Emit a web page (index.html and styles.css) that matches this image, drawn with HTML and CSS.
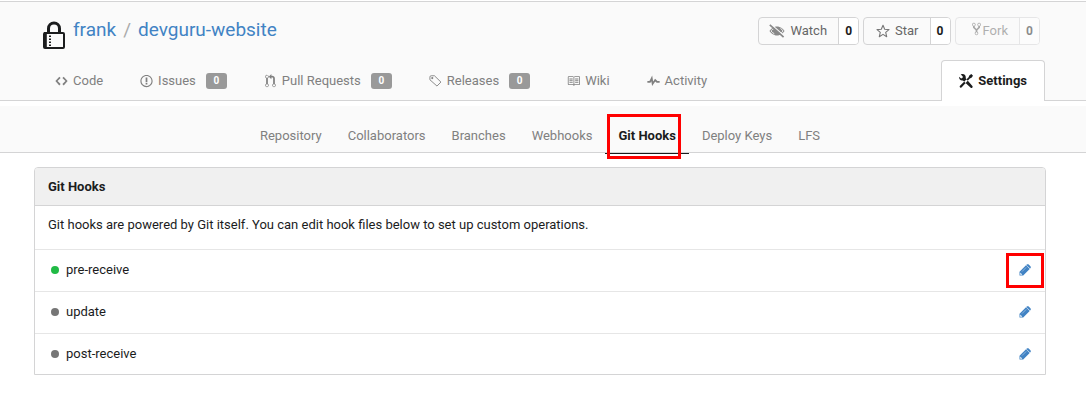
FILE: index.html
```html
<!DOCTYPE html>
<html lang="en">
<head>
<meta charset="utf-8">
<meta name="viewport" content="width=device-width, initial-scale=1">
<title>frank/devguru-website - Git Hooks</title>
<link rel="stylesheet" href="styles.css">
</head>
<body>
<svg class="sprite" aria-hidden="true">
  <symbol id="pencil" viewBox="0 0 12 12"><path d="M.5 7.800 7 1.300l3.700 3.700-6.500 6.500H.5zM7.800.6c.7-.6 1.300-.6 1.900 0l1.700 1.700c.6.6.6 1.300 0 1.900l-.4.4L7.300 1.100z"/><path d="M1.400 9v1.600H3zM3 7.600l4.200-4.200" fill="#fff" stroke="#fff" stroke-width=".4"/></symbol>
</svg>
<header class="repo-header">
  <div class="container title-row">
    <svg class="lock" viewBox="0 0 22 28" aria-hidden="true">
      <path fill="none" stroke="#1b1c1d" stroke-width="3" d="M5.500 12V7.500a5.500 5.500 0 0 1 11 0V12"/>
      <rect x="1" y="12" width="20" height="15" rx="1" fill="#fafafa" stroke="#1b1c1d" stroke-width="2"/>
      <path fill="#1b1c1d" d="M1 11h2.800v16H1zM6 14.500h2V16H6zM6 17.500h2V19H6zM6 20.500h2V22H6zM6 23.500h2V25H6z"/>
    </svg>
    <h1 class="title"><a href="#">frank</a><span class="slash">/</span><a href="#">devguru-website</a></h1>
    <div class="actions">
      <div class="labeled">
        <button class="action" type="button"><svg class="icon-eye" viewBox="0 0 16 14" aria-hidden="true"><path d="M8 2.500C4.500 2.500 1.700 5 .5 7c1.200 2 4 4.500 7.500 4.500S14.300 9 15.500 7C14.300 5 11.500 2.500 8 2.500z" fill="#888"/><path d="M5 4.500C3.500 5 2.700 6 2 7c.8 1.100 2 2.200 3.300 2.700M11.500 4.500c1.300.6 2 1.500 2.500 2.500-.6 1-1.500 2-2.800 2.600" stroke="#fafafa" stroke-width=".9" fill="none"/><path d="M2.200.4 15.500 12.200" stroke="#fafafa" stroke-width="1.200"/><path d="M.8.8 14.600 13.200" stroke="#888" stroke-width="1.700"/></svg>Watch</button><a class="count" href="#">0</a>
      </div>
      <div class="labeled">
        <button class="action star" type="button"><svg class="icon-star" viewBox="0 0 14 14" aria-hidden="true"><path d="M7 1.200 8.700 5.200l4.300.4-3.300 2.800 1 4.300L7 10.400l-3.700 2.300 1-4.300L1 5.600l4.300-.4z" fill="none" stroke="#777" stroke-width="1.100" stroke-linejoin="round"/></svg>Star</button><a class="count" href="#">0</a>
      </div>
      <div class="labeled disabled">
        <button class="action fork" type="button" disabled><svg class="icon-fork" viewBox="0 0 10 16" aria-hidden="true"><path fill="#555" fill-rule="evenodd" d="M8 1a1.993 1.993 0 0 0-1 3.720V6L5 8 3 6V4.720A1.993 1.993 0 0 0 2 1a1.993 1.993 0 0 0-1 3.720V6.500l3 3v1.780A1.993 1.993 0 0 0 5 15a1.993 1.993 0 0 0 1-3.720V9.500l3-3V4.720A1.993 1.993 0 0 0 8 1zM2 4.200C1.340 4.200.8 3.650.8 3c0-.65.550-1.200 1.200-1.200.65 0 1.200.550 1.200 1.200 0 .65-.550 1.200-1.200 1.200zm3 10c-.66 0-1.200-.550-1.200-1.200 0-.65.550-1.200 1.200-1.200.65 0 1.200.550 1.200 1.200 0 .65-.550 1.200-1.200 1.200zm3-10c-.66 0-1.200-.550-1.200-1.200 0-.65.550-1.200 1.200-1.200.65 0 1.200.550 1.200 1.200 0 .65-.550 1.200-1.200 1.200z"/></svg>Fork</button><a class="count" href="#">0</a>
      </div>
    </div>
  </div>
  <nav class="container tabs" aria-label="Repository">
    <a class="tab" href="#"><svg viewBox="0 0 14 16" aria-hidden="true"><path d="M9.500 3 8 4.500 11.500 8 8 11.500 9.500 13 14 8 9.500 3zm-5 0L0 8l4.500 5L6 11.500 2.500 8 6 4.500 4.500 3z"/></svg>Code</a>
    <a class="tab" href="#"><svg viewBox="0 0 14 16" aria-hidden="true"><path d="M7 2.300c3.140 0 5.700 2.560 5.700 5.700s-2.560 5.700-5.700 5.700A5.710 5.710 0 0 1 1.300 8c0-3.140 2.560-5.700 5.700-5.700zM7 1C3.140 1 0 4.140 0 8s3.140 7 7 7 7-3.140 7-7-3.140-7-7-7zm1 3H6v5h2V4zm0 6H6v2h2v-2z" fill-rule="evenodd"/></svg>Issues<span class="badge">0</span></a>
    <a class="tab" href="#"><svg viewBox="0 0 12 16" aria-hidden="true"><path fill-rule="evenodd" d="M11 11.280V5c-.030-.780-.340-1.470-.940-2.060C9.460 2.350 8.780 2.030 8 2H7V0L4 3l3 3V4h1c.270.020.480.110.690.310.210.200.300.420.310.690v6.280A1.993 1.993 0 0 0 10 15a1.993 1.993 0 0 0 1-3.720zm-1 2.920c-.660 0-1.200-.550-1.200-1.200 0-.650.550-1.200 1.200-1.200.650 0 1.200.550 1.200 1.200 0 .650-.550 1.200-1.200 1.200zM4 3c0-1.110-.890-2-2-2a1.993 1.993 0 0 0-1 3.720v6.560A1.993 1.993 0 0 0 2 15a1.993 1.993 0 0 0 1-3.720V4.720c.590-.340 1-.980 1-1.720zm-.8 10c0 .660-.550 1.200-1.200 1.200-.650 0-1.200-.550-1.200-1.200 0-.650.550-1.200 1.200-1.200.650 0 1.200.550 1.200 1.200zM2 4.200C1.340 4.200.8 3.650.8 3c0-.650.550-1.200 1.200-1.200.650 0 1.200.550 1.200 1.200 0 .650-.550 1.200-1.200 1.200z"/></svg>Pull Requests<span class="badge">0</span></a>
    <a class="tab" href="#"><svg viewBox="0 0 14 16" aria-hidden="true"><path d="M.6 3.600A1.500 1.500 0 0 1 2.100 2h3.700l7.400 7.200-4.500 4.600L.6 6.600z" fill="none" stroke="#888" stroke-width="1.100" stroke-linejoin="round"/><circle cx="3.300" cy="4.700" r="1.200"/></svg>Releases<span class="badge">0</span></a>
    <a class="tab" href="#"><svg viewBox="0 0 16 16" aria-hidden="true"><path fill-rule="evenodd" d="M3 5h4v1H3V5zm0 3h4V7H3v1zm0 2h4V9H3v1zm11-5h-4v1h4V5zm0 2h-4v1h4V7zm0 2h-4v1h4V9zm2-6v9c0 .550-.450 1-1 1H9.500l-1 1-1-1H2c-.550 0-1-.450-1-1V3c0-.550.450-1 1-1h5.500l1 1 1-1H15c.550 0 1 .450 1 1zm-8 .5L7.500 3H2v9h6V3.500zm7-.5H9.500l-.5.5V12h6V3z"/></svg>Wiki</a>
    <a class="tab" href="#"><svg viewBox="0 0 14 16" aria-hidden="true"><path d="M11.500 8 8.800 5.400 6.600 8.500 5.500 1.600 2.380 8H0v2h3.600l.9-1.800.9 5.400L9 8.500l1.600 1.500H14V8h-2.500z"/></svg>Activity</a>
    <a class="tab settings" href="#" aria-current="page"><svg viewBox="0 0 14 16" aria-hidden="true"><path d="M1.700 1.300 3.900 3.700l-.5 1.200-1.300.5L0 3.800C0 6.200 1.600 7.800 3.900 7.400L11.700 14.800c1 .9 2.500-.6 1.700-1.700L6.700 5.200C7.100 3 6 1.200 3.600 1zM12.300 1 14 2.700 12.500 4.800 10.800 5.500 2.500 14.600C1.800 15.200.2 14 .8 13L9.600 4.300l.7-1.800z"/></svg>Settings</a>
  </nav>
</header>
<nav class="subnav" aria-label="Settings">
  <a href="#">Repository</a>
  <a href="#">Collaborators</a>
  <a href="#">Branches</a>
  <a href="#">Webhooks</a>
  <a class="active" href="#" aria-current="page">Git Hooks</a>
  <a href="#">Deploy Keys</a>
  <a href="#">LFS</a>
</nav>
<main class="container">
  <section class="panel">
    <h2 class="panel-title">Git Hooks</h2>
    <p class="description">Git hooks are powered by Git itself. You can edit hook files below to set up custom operations.</p>
    <ul class="hooks">
      <li><span class="dot on"></span>pre-receive<a class="edit marked" href="#" aria-label="Edit pre-receive"><svg><use href="#pencil"/></svg></a></li>
      <li><span class="dot"></span>update<a class="edit" href="#" aria-label="Edit update"><svg><use href="#pencil"/></svg></a></li>
      <li><span class="dot"></span>post-receive<a class="edit" href="#" aria-label="Edit post-receive"><svg><use href="#pencil"/></svg></a></li>
    </ul>
  </section>
</main>
</body>
</html>
```
FILE: styles.css
```css
* { box-sizing: border-box; }

body {
  margin: 0;
  padding-top: 1px;
  background: #fff;
  color: #1b1c1d;
  font: 13px/20px Roboto, "Liberation Sans", sans-serif;
}

a { color: #4183c4; text-decoration: none; }
.sprite { position: absolute; width: 0; height: 0; }
.container { margin: 0 40px 0 34px; }

.repo-header {
  background: #fafafa;
  border-top: 1px solid #d4d4d5;
  border-bottom: 1px solid #d4d4d5;
}

.title-row { display: flex; align-items: flex-start; height: 58px; padding: 15px 6px 0 9px; }
.lock { width: 22px; height: 28px; margin-top: 4px; }
.title { flex: 1; margin: 0 0 0 8px; font-size: 19px; line-height: 26px; font-weight: 400; }
.slash { margin: 0 7px; color: #aaa; }

.actions { display: flex; align-items: flex-start; gap: 4px; }
.labeled { display: flex; height: 28px; border: 1px solid #d4d4d5; border-radius: 4px; }
.action {
  display: flex;
  align-items: center;
  gap: 5px;
  padding: 0 11px 0 10px;
  border: 0;
  background: none;
  color: #666;
  font: inherit;
}
.action svg { flex: none; }
.star { padding-left: 12px; }
.fork { gap: 2px; padding-left: 16px; }
.icon-eye { width: 16px; height: 14px; }
.icon-star { width: 14px; height: 14px; }
.icon-fork { width: 9px; height: 14px; margin-bottom: 4px; }
.count {
  width: 20px;
  border-left: 1px solid #d4d4d5;
  border-radius: 0 3px 3px 0;
  background: #fff;
  color: #1b1c1d;
  font-size: 12px;
  font-weight: 700;
  line-height: 26px;
  text-align: center;
}
.disabled { opacity: .5; }

.tabs { display: flex; height: 41px; margin-bottom: -1px; padding-left: 2px; }
.tab { display: flex; align-items: center; gap: 5px; padding: 0 18px 0 19px; color: #808080; }
.tab svg { flex: none; width: 13px; height: 14px; fill: #808080; }
.badge {
  width: 21px;
  height: 16px;
  margin-left: 5px;
  border-radius: 3px;
  background: #999;
  color: #fff;
  font-size: 10px;
  font-weight: 700;
  line-height: 16px;
  text-align: center;
}
.settings {
  margin-left: auto;
  margin-right: 1px;
  padding: 0 17px;
  border: 1px solid #d4d4d5;
  border-bottom: 0;
  border-radius: 4px 4px 0 0;
  background: #fff;
  color: #1b1c1d;
  font-weight: 700;
}
.settings svg { width: 14px; height: 16px; fill: #1b1c1d; }

.subnav {
  display: flex;
  justify-content: center;
  height: 47px;
  margin-top: 5px;
  padding: 20px 40px 0 34px;
  border-bottom: 1px solid #d4d4d5;
  background: #fafafa;
}
.subnav a { position: relative; height: 28px; padding: 0 13px; color: #808080; }
.subnav .active { border-bottom: 1px solid #1b1c1d; color: #1b1c1d; font-weight: 700; }
.subnav .active::after {
  content: "";
  position: absolute;
  inset: -12px 8px -6px 2px;
  border: 3px solid #f00;
}

.panel { margin-top: 14px; border: 1px solid #d4d4d5; border-radius: 4px 4px 0 0; }
.panel-title {
  margin: 0;
  padding: 9px 13px 8px;
  border-bottom: 1px solid #d4d4d5;
  border-radius: 3px 3px 0 0;
  background: #f0f0f0;
  font-size: 13px;
  line-height: 20px;
}
.description { margin: 0; padding: 9px 13px 14px; }
.hooks { margin: 0; padding: 0; list-style: none; }
.hooks li {
  display: flex;
  align-items: center;
  height: 42px;
  padding: 0 1px 1px 16px;
  border-top: 1px solid #e6e6e6;
}
.hooks li:last-child { height: 41px; padding-bottom: 0; }
.dot { width: 8px; height: 8px; margin-right: 7px; border-radius: 50%; background: #767676; }
.dot.on { background: #21ba45; }
.edit { display: flex; align-items: center; justify-content: center; width: 38px; height: 35px; margin-left: auto; }
.edit svg { width: 12px; height: 12px; fill: #4183c4; }
.marked { border: 3px solid #f00; }
```
